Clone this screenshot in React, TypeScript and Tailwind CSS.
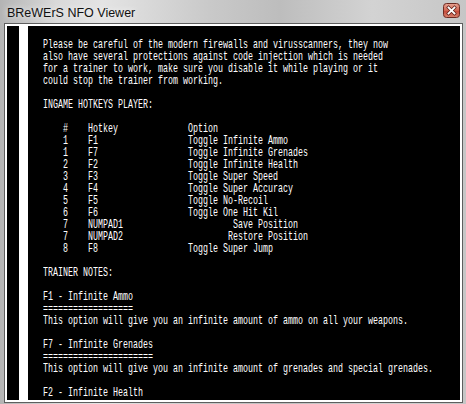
const lines = [
  'Please be careful of the modern firewalls and virusscanners, they now',
  'also have several protections against code injection which is needed',
  'for a trainer to work, make sure you disable it while playing or it',
  'could stop the trainer from working.',
  '',
  'INGAME HOTKEYS PLAYER:',
  '',
  '    #    Hotkey              Option',
  '    1    F1                  Toggle Infinite Ammo',
  '    1    F7                  Toggle Infinite Grenades',
  '    2    F2                  Toggle Infinite Health',
  '    3    F3                  Toggle Super Speed',
  '    4    F4                  Toggle Super Accuracy',
  '    5    F5                  Toggle No-Recoil',
  '    6    F6                  Toggle One Hit Kil',
  '    7    NUMPAD1                      Save Position',
  '    7    NUMPAD2                     Restore Position',
  '    8    F8                  Toggle Super Jump',
  '',
  'TRAINER NOTES:',
  '',
  'F1 - Infinite Ammo',
  '==================',
  'This option will give you an infinite amount of ammo on all your weapons.',
  '',
  'F7 - Infinite Grenades',
  '======================',
  'This option will give you an infinite amount of grenades and special grenades.',
  '',
  'F2 - Infinite Health',
];

export default function App() {
  return (
    <div className="w-[466px] h-[404px] overflow-hidden flex flex-col bg-[linear-gradient(90deg,#b4b4b4_0%,#d9d9d9_12%,#e4e4e4_22%,#c9c9c9_45%,#bdbdbd_60%,#d3d3d3_80%,#c6c6c6_100%)] font-['Liberation_Sans',sans-serif]">
      {/* Title bar */}
      <div className="h-[23px] flex items-center justify-between pl-[7px] pr-[6px]">
        <span className="text-[12.5px] text-[#111111] leading-none pt-[3px] [text-shadow:0_0_6px_#ffffff]">
          BReWErS NFO Viewer
        </span>
        <svg width="17" height="15" viewBox="0 0 17 15" className="mb-[2px]">
          <defs>
            <linearGradient id="cls" x1="0" y1="0" x2="0" y2="1">
              <stop offset="0" stopColor="#e8a393" />
              <stop offset="0.5" stopColor="#d06552" />
              <stop offset="0.55" stopColor="#c44a3b" />
              <stop offset="1" stopColor="#d88470" />
            </linearGradient>
          </defs>
          <rect x="0.5" y="0.5" width="16" height="14" rx="3" fill="url(#cls)" stroke="#6d2b22" />
          <path d="M5.5 4.5 L11.5 10.5 M11.5 4.5 L5.5 10.5" stroke="#5a1d16" strokeWidth="3.2" strokeLinecap="square" />
          <path d="M5.5 4.5 L11.5 10.5 M11.5 4.5 L5.5 10.5" stroke="#ffffff" strokeWidth="1.8" strokeLinecap="square" />
        </svg>
      </div>

      {/* Viewer */}
      <div className="flex-1 ml-[4px] mr-[3px] mb-[1px] border border-[#5e5e5e]">
        <div className="h-full border-2 border-white bg-black flex overflow-hidden">
          <div className="ml-[12px] w-[9px] bg-white shrink-0" />
          <div className="flex-1 overflow-hidden pl-[15px] pt-[13px]">
            <pre className="font-['Liberation_Mono',monospace] text-[13px] leading-[12px] text-white origin-top-left scale-x-[0.641] w-[760px]">
              {lines.join('\n')}
            </pre>
          </div>
        </div>
      </div>
    </div>
  );
}
